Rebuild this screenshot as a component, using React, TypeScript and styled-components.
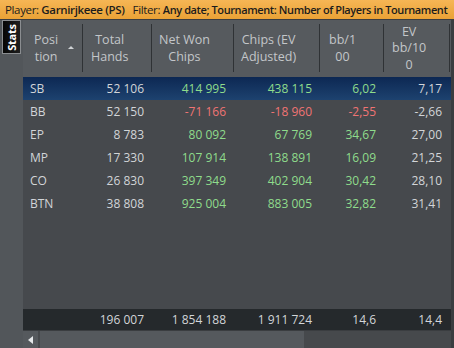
import styled, { createGlobalStyle } from 'styled-components'

const GlobalStyle = createGlobalStyle`
  html, body { margin: 0; padding: 0; background: #46494d; }
  body { font-family: 'Open Sans', 'Noto Sans', sans-serif; }
`

type Tone = 'pos' | 'neg' | 'plain'

const toneColor: Record<Tone, string> = {
  pos: '#8fdc8c',
  neg: '#f07474',
  plain: '#d2d5d8',
}

const columns = [
  { key: 'pos', lines: ['Posi', 'tion'], width: 60, padLeft: 11, sorted: true },
  { key: 'hands', lines: ['Total', 'Hands'], width: 69, padLeft: 8 },
  { key: 'net', lines: ['Net Won', 'Chips'], width: 82, padLeft: 7 },
  { key: 'ev', lines: ['Chips (EV', 'Adjusted)'], width: 86, padLeft: 7 },
  { key: 'bb', lines: ['bb/1', '00'], width: 64, padLeft: 9 },
  { key: 'evbb', lines: ['EV', 'bb/10', '0'], width: 66, padLeft: 8 },
]

const gridCols = columns.map((c) => `${c.width}px`).join(' ')

type Cell = [string, Tone]

const rows: { pos: string; selected?: boolean; cells: Cell[] }[] = [
  { pos: 'SB', selected: true, cells: [['52 106', 'plain'], ['414 995', 'pos'], ['438 115', 'pos'], ['6,02', 'pos'], ['7,17', 'plain']] },
  { pos: 'BB', cells: [['52 150', 'plain'], ['-71 166', 'neg'], ['-18 960', 'neg'], ['-2,55', 'neg'], ['-2,66', 'plain']] },
  { pos: 'EP', cells: [['8 783', 'plain'], ['80 092', 'pos'], ['67 769', 'pos'], ['34,67', 'pos'], ['27,00', 'plain']] },
  { pos: 'MP', cells: [['17 330', 'plain'], ['107 914', 'pos'], ['138 891', 'pos'], ['16,09', 'pos'], ['21,25', 'plain']] },
  { pos: 'CO', cells: [['26 830', 'plain'], ['397 349', 'pos'], ['402 904', 'pos'], ['30,42', 'pos'], ['28,10', 'plain']] },
  { pos: 'BTN', cells: [['38 808', 'plain'], ['925 004', 'pos'], ['883 005', 'pos'], ['32,82', 'pos'], ['31,41', 'plain']] },
]

const totals = ['196 007', '1 854 188', '1 911 724', '14,6', '14,4']

const Window = styled.div`
  width: 454px;
  height: 348px;
  display: flex;
  flex-direction: column;
  overflow: hidden;
  background: #46494d;
  font-size: 12px;
`

const TopBar = styled.div`
  height: 19px;
  flex: none;
  display: flex;
  align-items: center;
  gap: 8px;
  padding-left: 5px;
  background: linear-gradient(#f6b655, #eaa236);
  color: #1c1c1c;
  font-size: 11.5px;
  letter-spacing: -0.35px;
  white-space: nowrap;
  overflow: hidden;
`

const Label = styled.span<{ $tight?: boolean }>`
  font-weight: 400;
  b {
    font-weight: 600;
    font-size: ${(p) => (p.$tight ? '11px' : 'inherit')};
    letter-spacing: ${(p) => (p.$tight ? '-0.4px' : 'inherit')};
  }
`

const Body = styled.div`
  flex: 1;
  display: flex;
  min-height: 0;
  border-top: 1px solid #3b3e42;
`

const Sidebar = styled.div`
  width: 23px;
  flex: none;
  background: #52565a;
  padding: 0 0 0 2px;
  box-sizing: border-box;
`

const StatsTab = styled.div`
  width: 19px;
  height: 34px;
  box-sizing: border-box;
  border: 1px solid #8a8d90;
  background: linear-gradient(90deg, #050505, #1e1e1e);
  display: flex;
  align-items: center;
  justify-content: center;
`

const StatsText = styled.span`
  transform: rotate(-90deg);
  color: #ffffff;
  font-weight: 700;
  font-size: 11px;
  letter-spacing: -0.2px;
`

const Table = styled.div`
  flex: 1;
  display: flex;
  flex-direction: column;
  min-width: 0;
  border-right: 3px solid #3a3d40;
`

const HeaderRow = styled.div`
  height: 57px;
  flex: none;
  display: grid;
  grid-template-columns: ${gridCols};
  background: #565a5e;
`

const HeaderCell = styled.div<{ $padLeft: number }>`
  position: relative;
  display: flex;
  align-items: center;
  gap: 10px;
  padding-left: ${(p) => p.$padLeft}px;

  &::after {
    content: '';
    position: absolute;
    right: 0;
    top: 4px;
    bottom: 5px;
    width: 1px;
    background: #2f3235;
  }
`

const HeaderText = styled.div`
  text-align: center;
  font-size: 12.5px;
  line-height: 16.5px;
  color: #c3c6c9;
`

const SortArrow = styled.span`
  width: 0;
  height: 0;
  border-left: 3px solid transparent;
  border-right: 3px solid transparent;
  border-bottom: 3px solid #d0d3d6;
  margin-top: -2px;
`

const Row = styled.div<{ $selected?: boolean }>`
  height: 23px;
  flex: none;
  display: grid;
  grid-template-columns: ${gridCols};
  align-items: center;
  background: ${(p) => (p.$selected ? 'linear-gradient(#0d2853, #1d426f)' : 'transparent')};
`

const PosCell = styled.div`
  padding-left: 7px;
  color: #d2d5d8;
`

const NumCell = styled.div<{ $tone: Tone }>`
  text-align: right;
  padding-right: 8px;
  color: ${(p) => toneColor[p.$tone]};
  white-space: nowrap;
`

const Filler = styled.div`
  flex: 1;
  background: #46494d;
`

const TotalsRow = styled(Row)`
  height: 21px;
  background: #25292c;
`

const Scrollbar = styled.div`
  height: 18px;
  flex: none;
  display: flex;
  gap: 2px;
  background: #46494c;
  border-top: 1px solid #3a3d40;
  box-sizing: border-box;
`

const ArrowButton = styled.div`
  width: 15px;
  display: flex;
  align-items: center;
  justify-content: center;
  background: #55595d;

  &::before {
    content: '';
    border-top: 4px solid transparent;
    border-bottom: 4px solid transparent;
    border-right: 5px solid #e6e8ea;
  }
`

const Thumb = styled.div`
  width: 264px;
  background: #55595d;
`

export default function App() {
  return (
    <>
      <GlobalStyle />
      <Window>
        <TopBar>
          <Label>
            Player: <b>Garnirjkeee (PS)</b>
          </Label>
          <Label $tight>
            Filter: <b>Any date; Tournament: Number of Players in Tournament</b>
          </Label>
        </TopBar>
        <Body>
          <Sidebar>
            <StatsTab>
              <StatsText>Stats</StatsText>
            </StatsTab>
          </Sidebar>
          <Table>
            <HeaderRow>
              {columns.map((c) => (
                <HeaderCell key={c.key} $padLeft={c.padLeft}>
                  <HeaderText>
                    {c.lines.map((l) => (
                      <div key={l}>{l}</div>
                    ))}
                  </HeaderText>
                  {c.sorted && <SortArrow />}
                </HeaderCell>
              ))}
            </HeaderRow>
            {rows.map((r) => (
              <Row key={r.pos} $selected={r.selected}>
                <PosCell>{r.pos}</PosCell>
                {r.cells.map(([v, tone], i) => (
                  <NumCell key={i} $tone={tone}>
                    {v}
                  </NumCell>
                ))}
              </Row>
            ))}
            <Filler />
            <TotalsRow>
              <PosCell />
              {totals.map((v, i) => (
                <NumCell key={i} $tone="plain">
                  {v}
                </NumCell>
              ))}
            </TotalsRow>
            <Scrollbar>
              <ArrowButton />
              <Thumb />
            </Scrollbar>
          </Table>
        </Body>
      </Window>
    </>
  )
}
